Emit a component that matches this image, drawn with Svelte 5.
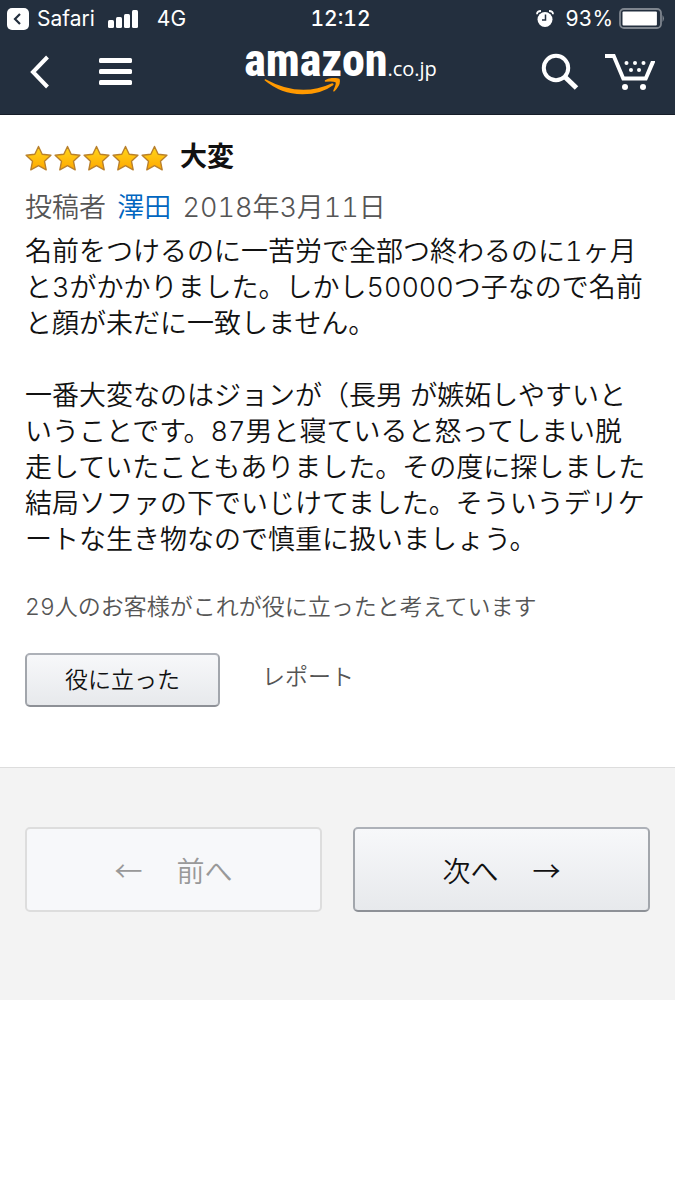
<script lang="ts">
  const review = {
    stars: 5,
    title: '大変',
    author: '澤田',
    date: '2018年3月11日',
    paragraphs: [
      '名前をつけるのに一苦労で全部つ終わるのに1ヶ月と3がかかりました。しかし50000つ子なので名前と顔が未だに一致しません。',
      '一番大変なのはジョンが（長男 が嫉妬しやすいということです。87男と寝ていると怒ってしまい脱走していたこともありました。その度に探しました結局ソファの下でいじけてました。そういうデリケートな生き物なので慎重に扱いましょう。',
    ],
    helpful: 29,
  };
  const battery = 93;
</script>

<div class="page" lang="ja">
  <header>
    <div class="status">
      <div class="status-left">
        <button class="return" aria-label="Safariに戻る">
          <svg width="22" height="22" viewBox="0 0 22 22">
            <rect width="22" height="22" rx="5" fill="#fff" />
            <path d="M13 6 8 11l5 5" fill="none" stroke="#232f3e" stroke-width="2.2" />
          </svg>
          <span>Safari</span>
        </button>
        <svg class="signal" width="30" height="18" viewBox="0 0 30 18" fill="#fff">
          <rect x="0" y="10" width="6" height="8" rx="1.5" />
          <rect x="8" y="7" width="6" height="11" rx="1.5" />
          <rect x="16" y="4" width="6" height="14" rx="1.5" />
          <rect x="24" y="0" width="6" height="18" rx="1.5" />
        </svg>
        <span>4G</span>
      </div>
      <span class="time">12:12</span>
      <div class="status-right">
        <svg width="18" height="18" viewBox="0 0 18 18">
          <circle cx="9" cy="9.5" r="7.5" fill="#fff" />
          <path d="M1 4.2Q1 1 5 1M17 4.2Q17 1 13 1" fill="none" stroke="#fff" stroke-width="1.8" />
          <path d="M9.5 4.500V10H6" fill="none" stroke="#232f3e" stroke-width="1.5" />
        </svg>
        <span class="percent">{battery}%</span>
        <svg width="46" height="22" viewBox="0 0 46 22">
          <rect x="1" y="1" width="41" height="19" rx="4" fill="none" stroke="#7e858e" stroke-width="1.8" />
          <rect x="3.5" y="3.5" width={(37 * battery) / 100} height="14" rx="1" fill="#fff" />
          <path d="M43.500 7q3 3.500 0 7z" fill="#7e858e" />
        </svg>
      </div>
    </div>

    <nav>
      <div class="nav-left">
        <button aria-label="戻る">
          <svg width="28" height="36" viewBox="0 0 28 36">
            <path d="M21.500 3 7 18l14.500 15" fill="none" stroke="#fff" stroke-width="4" />
          </svg>
        </button>
        <button aria-label="メニュー">
          <svg width="34" height="30" viewBox="0 0 34 30" fill="#fff">
            <rect x="0" y="1" width="33" height="5" rx="1.5" />
            <rect x="0" y="12" width="33" height="5" rx="1.5" />
            <rect x="0" y="23" width="33" height="5" rx="1.5" />
          </svg>
        </button>
      </div>
      <a class="logo" href="/" aria-label="amazon.co.jp">
        <span class="brand">amazon</span><span class="domain">.co.jp</span>
        <svg class="smile" width="78" height="20" viewBox="0 0 78 20" fill="#f90">
          <path d="M.5 2.200Q.7.900 2 1.500Q36 20 67.500 5.500Q70 4.800 69.500 7Q57 16.500 38 16.300Q17 16 .5 2.200Z" />
          <path d="M61 2.300Q67-1.500 75.500.7Q77.500 6 70.500 13.200Q69 14 69.300 12.500Q72.500 5.800 71.500 4.300Q69 3 61.500 3.800Q60.300 3.500 61 2.300Z" />
        </svg>
      </a>
      <div class="nav-right">
        <button aria-label="検索">
          <svg width="38" height="38" viewBox="0 0 38 38" fill="none" stroke="#fff">
            <circle cx="15" cy="15" r="12.2" stroke-width="4" />
            <path d="m23.500 23.500 12 11.500" stroke-width="5" />
          </svg>
        </button>
        <button aria-label="カート">
          <svg width="50" height="38" viewBox="0 0 50 38" fill="#fff">
            <path d="M0 1h10l9.500 22.500h20L46 8h4.500L42 27.500H17L7.500 5H0z" />
            <circle cx="21.500" cy="10" r="2" /><circle cx="30" cy="10" r="2" /><circle cx="38.500" cy="10" r="2" />
            <circle cx="26" cy="17" r="2" /><circle cx="34" cy="17" r="2" />
            <circle cx="20" cy="34" r="3" /><circle cx="38" cy="34" r="3" />
          </svg>
        </button>
      </div>
    </nav>
  </header>

  <main>
    <article>
      <div class="heading">
        <div class="stars" role="img" aria-label="5つ星のうち{review.stars}">
          {#each Array(review.stars) as _, i}
            <svg width="27" height="26" viewBox="0 0 27 26">
              <defs>
                <linearGradient id="star-{i}" x1="0" y1="0" x2="0" y2="1">
                  <stop offset="0" stop-color="#ffd71c" />
                  <stop offset="1" stop-color="#ffa800" />
                </linearGradient>
              </defs>
              <path
                d="m13.500 1.500 3.700 7.700 8.700 1.100-6.400 6 1.700 8.500-7.700-4.200-7.700 4.200 1.700-8.500-6.400-6 8.700-1.100z"
                fill="url(#star-{i})"
                stroke="#b9802c"
                stroke-width="1.4"
                stroke-linejoin="round"
              />
            </svg>
          {/each}
        </div>
        <h1>{review.title}</h1>
      </div>
      <p class="byline">
        投稿者 <a href="/profile">{review.author}</a>
        {review.date}
      </p>
      <div class="text">
        {#each review.paragraphs as paragraph}
          <p>{paragraph}</p>
        {/each}
      </div>
      <p class="helpful">{review.helpful}人のお客様がこれが役に立ったと考えています</p>
      <div class="actions">
        <button class="btn">役に立った</button>
        <a class="report" href="/report">レポート</a>
      </div>
    </article>

    <div class="pager">
      <button class="btn" disabled><span>←</span><span>前へ</span></button>
      <button class="btn"><span>次へ</span><span>→</span></button>
    </div>
  </main>
</div>

<style>
  :global(body) {
    margin: 0;
    background: #fff;
  }
  .page {
    font-family: Inter, 'Noto Sans CJK JP', sans-serif;
    font-weight: 350;
    font-variant-numeric: tabular-nums;
    color: #111;
  }
  p, h1 {
    margin: 0;
  }
  a {
    text-decoration: none;
  }
  button {
    padding: 0;
    border: 0;
    background: none;
    color: inherit;
    font: inherit;
    cursor: pointer;
  }
  svg {
    display: block;
    flex-shrink: 0;
  }

  header {
    background: #232f3e;
    border-bottom: 1px solid #161d28;
    color: #fff;
  }
  .status {
    display: grid;
    grid-template-columns: 1fr auto 1fr;
    align-items: center;
    height: 37px;
    padding: 0 10px 0 7px;
    font-size: 21px;
    font-weight: 400;
  }
  .status-left, .status-right, .return {
    display: flex;
    align-items: center;
  }
  .return {
    gap: 8px;
  }
  .signal {
    margin: 0 19px 0 13px;
  }
  .time {
    padding-left: 9px;
    font-weight: 500;
  }
  .status-right {
    justify-content: flex-end;
  }
  .percent {
    margin: 0 6px 0 11px;
  }

  nav {
    display: grid;
    grid-template-columns: 1fr auto 1fr;
    align-items: start;
    height: 77px;
    padding: 0 20px 0 26px;
  }
  .nav-left, .nav-right {
    display: flex;
    align-items: center;
    height: 70px;
  }
  .nav-left {
    gap: 45px;
  }
  .nav-right {
    justify-content: flex-end;
    gap: 26px;
  }
  .logo {
    position: relative;
    display: flex;
    align-items: baseline;
    height: 70px;
    line-height: 46px;
    color: #fff;
  }
  .brand {
    font-family: 'Roboto Condensed', 'Open Sans Condensed', Roboto, sans-serif;
    font-size: 46px;
    font-weight: 800;
  }
  .domain {
    font-family: 'Open Sans', sans-serif;
    font-size: 20px;
    font-weight: 400;
  }
  .smile {
    position: absolute;
    left: 20px;
    top: 41px;
  }

  article {
    padding: 24px 25px 60px;
    line-height: 36px;
    border-bottom: 1px solid #ddd;
  }
  .heading {
    display: flex;
    align-items: center;
    gap: 12px;
  }
  .stars {
    display: flex;
    gap: 2px;
    padding-top: 2px;
  }
  h1 {
    font-size: 27px;
    line-height: 36px;
    font-weight: 700;
  }
  .byline {
    margin-top: 15px;
    font-size: 27px;
    color: #555;
  }
  .byline a {
    margin: 0 4px;
    color: #0066c0;
  }
  .text {
    margin-top: 8px;
    padding-right: 3px;
    font-size: 27px;
    line-break: loose;
  }
  .text p + p {
    margin-top: 36px;
  }
  .helpful {
    margin-top: 31px;
    font-size: 23px;
    color: #555;
  }
  .actions {
    display: flex;
    align-items: center;
    gap: 42px;
    margin-top: 28px;
    font-size: 23px;
  }
  .report {
    padding-bottom: 6px;
    color: #555;
  }
  .btn {
    box-sizing: border-box;
    height: 54px;
    padding: 0 38px;
    border: 2px solid;
    border-color: #adb1b8 #a2a6ac #8d9096;
    border-radius: 5px;
    background: linear-gradient(#f7f8fa, #e7e9ec);
    color: #111;
  }

  .pager {
    display: grid;
    grid-template-columns: 1fr 1fr;
    gap: 31px;
    padding: 59px 25px 88px;
    background: #f3f3f3;
    font-family: 'Noto Sans CJK JP', sans-serif;
    font-size: 28px;
  }
  .pager .btn {
    display: flex;
    align-items: center;
    justify-content: center;
    gap: 34px;
    height: 85px;
    padding: 0;
  }
  .pager .btn:disabled {
    border-color: #ddd;
    background: #f7f8fa;
    color: #999;
    cursor: default;
  }
</style>
